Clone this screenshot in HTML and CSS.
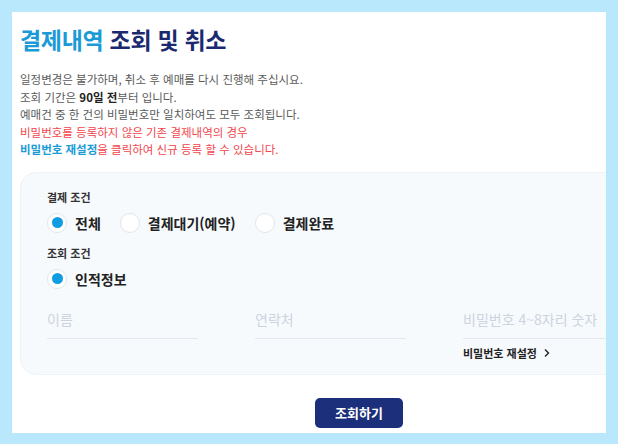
FILE: index.html
```html
<!DOCTYPE html>
<html lang="ko">
<head>
<meta charset="utf-8">
<link rel="stylesheet" href="styles.css">
</head>
<body>
<div class="panel">
  <h1 class="title"><span class="accent">결제내역</span> 조회 및 취소</h1>
  <div class="desc">
    <p>일정변경은 불가하며, 취소 후 예매를 다시 진행해 주십시요.</p>
    <p>조회 기간은 <b>90일 전</b>부터 입니다.</p>
    <p>예매건 중 한 건의 비밀번호만 일치하여도 모두 조회됩니다.</p>
    <p class="red">비밀번호를 등록하지 않은 기존 결제내역의 경우</p>
    <p class="red"><b class="blue">비밀번호 재설정</b>을 클릭하여 신규 등록 할 수 있습니다.</p>
  </div>
  <div class="formbox">
    <div class="label">결제 조건</div>
    <div class="radios">
      <label class="opt"><span class="radio on"></span><span>전체</span></label>
      <label class="opt"><span class="radio"></span><span>결제대기(예약)</span></label>
      <label class="opt"><span class="radio"></span><span>결제완료</span></label>
    </div>
    <div class="label second">조회 조건</div>
    <div class="radios">
      <label class="opt"><span class="radio on"></span><span>인적정보</span></label>
    </div>
    <div class="fields">
      <div class="field"><div class="input">이름</div></div>
      <div class="field"><div class="input">연락처</div></div>
      <div class="field">
        <div class="input">비밀번호 4~8자리 숫자</div>
        <div class="reset">비밀번호 재설정
          <svg width="10" height="10" viewBox="0 0 10 10"><path d="M3 1.5 L6.5 5 L3 8.5" fill="none" stroke="#222" stroke-width="1.4"/></svg>
        </div>
      </div>
    </div>
  </div>
  <div class="actions">
    <button class="btn">조회하기</button>
  </div>
</div>
</body>
</html>
```
FILE: styles.css
```css
html, body { margin: 0; padding: 0; }
body {
  background: #b9e8fc;
  font-family: "Noto Sans CJK KR", "Noto Sans", sans-serif;
  width: 618px;
  height: 444px;
  overflow: hidden;
}
.panel {
  margin: 12px 12px 0 12px;
  background: #fff;
  height: 421px;
  overflow: hidden;
  padding: 11px 0 0 8px;
  box-sizing: border-box;
}
.title {
  margin: 0;
  font-size: 23px;
  line-height: 32px;
  font-weight: 700;
  color: #1b2a6e;
  letter-spacing: -0.3px;
}
.accent { color: #1a9bd7; }
.desc { margin-top: 16px; font-size: 11.5px; line-height: 17.6px; color: #5a5a5a; }
.desc p { margin: 0; }
.desc b { color: #222; font-weight: 700; }
.desc .red { color: #f2454c; }
.desc b.blue { color: #1a9bd7; }
.formbox {
  margin-top: 13px;
  width: 640px;
  height: 203px;
  box-sizing: border-box;
  background: #f7fafd;
  border: 1px solid #eef3f8;
  border-radius: 16px;
  padding: 16px 0 0 26px;
}
.label { font-size: 11px; line-height: 16px; font-weight: 700; color: #333; }
.label.second { margin-top: 12px; }
.radios { display: flex; gap: 19px; margin-top: 8px; height: 20px; align-items: center; }
.opt { display: flex; align-items: center; gap: 8px; font-size: 14px; font-weight: 700; color: #222; line-height: 20px; }
.radio {
  width: 20px; height: 20px; box-sizing: border-box;
  border-radius: 50%;
  background: #fff;
  border: 1px solid #dfe5ec;
  display: flex; align-items: center; justify-content: center;
}
.radio.on::after {
  content: "";
  width: 11px; height: 11px; border-radius: 50%;
  background: #0d9de0;
}
.fields { display: grid; grid-template-columns: 151px 151px 160px; column-gap: 57px; margin-top: 16px; }
.input {
  font-size: 14px; line-height: 20px; color: #cbd4df;
  padding: 4px 0 9px;
  border-bottom: 1px solid #e3e9f3;
  white-space: nowrap;
}
.field:last-child .input { margin-right: -40px; }
.reset {
  margin-top: 6px;
  font-size: 11px; line-height: 16px; font-weight: 700; color: #222;
  display: flex; align-items: center; gap: 5px;
}
.actions { padding: 23px 0 0 295px; }
.btn {
  width: 88px; height: 30px;
  background: #1c2f7a;
  color: #fff;
  border: 0;
  border-radius: 5px;
  font-family: inherit;
  font-size: 13px;
  font-weight: 700;
  padding: 0;
}
```
